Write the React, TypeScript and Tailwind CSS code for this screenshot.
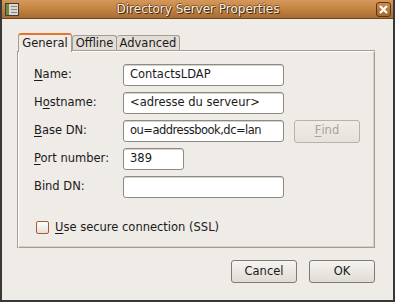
import React from 'react'

const font = { fontFamily: '"DejaVu Sans", "Liberation Sans", sans-serif' }

function Mn({ text, at }: { text: string; at: number }) {
  if (at < 0) return <>{text}</>
  return (
    <>
      {text.slice(0, at)}
      <span className="underline underline-offset-2">{text[at]}</span>
      {text.slice(at + 1)}
    </>
  )
}

function Field({ value, width, tight }: { value: string; width: string; tight?: boolean }) {
  return (
    <div
      className={`${width} h-[22px] flex items-center px-[6px] bg-white border border-[#8f8a82] rounded-[3px] shadow-[inset_0_1px_0_#d6d2cc] text-[#1a1a1a] ${
        tight ? 'tracking-[-0.5px]' : ''
      }`}
    >
      {value}
    </div>
  )
}

function Button({ children, disabled }: { children: React.ReactNode; disabled?: boolean }) {
  return (
    <div
      className={`w-[66px] h-[23px] flex items-center justify-center rounded-[3px] border ${
        disabled
          ? 'border-[#b8b2a8] text-[#a8a398] bg-gradient-to-b from-[#f0ede9] to-[#e6e2dc]'
          : 'border-[#7f7a72] text-[#1a1a1a] bg-gradient-to-b from-[#f6f4f1] to-[#e0dcd5]'
      }`}
    >
      {children}
    </div>
  )
}

const rows = [
  { label: 'Name:', at: 0, value: 'ContactsLDAP', w: 'w-[161px]' },
  { label: 'Hostname:', at: 1, value: '<adresse du serveur>', w: 'w-[161px]' },
  { label: 'Base DN:', at: 0, value: 'ou=addressbook,dc=lan', w: 'w-[161px]', find: true },
  { label: 'Port number:', at: 0, value: '389', w: 'w-[61px]' },
  { label: 'Bind DN:', at: -1, value: '', w: 'w-[161px]' },
]

export default function App() {
  return (
    <div style={font} className="w-[395px] h-[302px] text-[11.5px] text-[#1a1a1a] bg-[#efebe7] border-x-2 border-b-2 border-[#3a3836] flex flex-col">
      {/* title bar */}
      <div className="h-[19px] flex items-center px-[1px] bg-gradient-to-b from-[#d5975c] via-[#c4843f] to-[#a96c32] border-b border-[#6b4420]">
        <svg width="16" height="15" viewBox="0 0 16 15" className="ml-[1px]">
          <rect x="1.5" y="1.5" width="13" height="12" fill="#dad7d1" stroke="#3d3d3d" />
          <rect x="2" y="2" width="3" height="11" fill="#6f8a3c" />
          <line x1="7" y1="4.5" x2="13" y2="4.5" stroke="#8a8781" />
          <line x1="7" y1="7.5" x2="13" y2="7.5" stroke="#8a8781" />
          <line x1="7" y1="10.5" x2="13" y2="10.5" stroke="#8a8781" />
        </svg>
        <div className="flex-1 text-center text-[12px] text-[#f6efe6] [text-shadow:1px_1px_0_#4a2d10,-1px_0_0_#7a4a1c,0_-1px_0_#8a5522]">
          Directory Server Properties
        </div>
        <div className="w-[15px] h-[15px] mr-[1px] rounded-[3px] border border-[#5a3814] bg-gradient-to-b from-[#c98a4e] to-[#a66a31] flex items-center justify-center">
          <svg width="9" height="9" viewBox="0 0 9 9">
            <path d="M1 1 L8 8 M8 1 L1 8" stroke="#fff" strokeWidth="2.2" />
          </svg>
        </div>
      </div>

      {/* notebook */}
      <div className="mt-[13px] ml-[16px] mr-[18px] flex flex-col">
        <div className="flex items-end h-[19px]">
          <div className="h-[19px] w-[54px] flex items-center justify-center border-t-2 border-[#e5752e] border-x border-x-[#a59d91] rounded-t-[3px] bg-[#efebe7] relative top-[1px] z-10">
            General
          </div>
          <div className="h-[16px] w-[45px] flex items-center justify-center border border-b-0 border-[#a59d91] rounded-t-[3px] bg-[#e2ddd6]">
            Offline
          </div>
          <div className="h-[16px] w-[63px] flex items-center justify-center border border-b-0 border-l-0 border-[#a59d91] rounded-t-[3px] bg-[#e2ddd6]">
            Advanced
          </div>
        </div>
        <div className="h-[197px] border border-[#a59d91] border-t-white border-l-white bg-[#efebe7] shadow-[inset_-1px_-1px_0_#d7d0c5,-1px_0_0_#a59d91,0_-1px_0_#a59d91] pt-[12px] pl-[15px] flex flex-col">
          <div className="flex flex-col gap-[6px]">
            {rows.map((r) => (
              <div key={r.label} className="flex items-center h-[22px]">
                <div className="w-[89px]">
                  <Mn text={r.label} at={r.at} />
                </div>
                <Field value={r.value} width={r.w} tight={r.find} />
                {r.find && (
                  <div className="ml-[10px]">
                    <Button disabled>
                      <Mn text="Find" at={0} />
                    </Button>
                  </div>
                )}
              </div>
            ))}
          </div>
          <div className="mt-[21px] ml-[2px] flex items-center gap-[6px]">
            <div className="w-[13px] h-[13px] rounded-[2px] border border-[#a85c2c] bg-gradient-to-b from-white to-[#e4e0da]" />
            <span>
              <Mn text="Use secure connection (SSL)" at={0} />
            </span>
          </div>
        </div>
      </div>

      {/* buttons */}
      <div className="mt-[12px] mr-[18px] flex justify-end gap-[12px]">
        <Button>Cancel</Button>
        <Button>OK</Button>
      </div>
    </div>
  )
}
